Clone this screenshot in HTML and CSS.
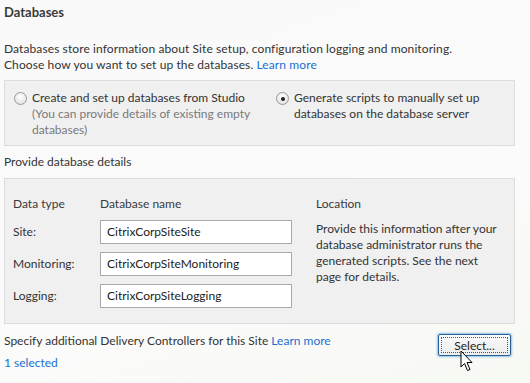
FILE: index.html
```html
<!DOCTYPE html>
<html>
<head>
<meta charset="utf-8">
<link rel="stylesheet" href="styles.css">
</head>
<body>
<div class="page">
  <h1 class="title">Databases</h1>
  <p class="desc">Databases store information about Site setup, configuration logging and monitoring.<br>Choose how you want to set up the databases. <a class="link">Learn more</a></p>
  <div class="choice-box">
    <label class="choice">
      <span class="radio"></span>
      <span class="choice-text">Create and set up databases from Studio<br><span class="muted">(You can provide details of existing empty databases)</span></span>
    </label>
    <label class="choice">
      <span class="radio checked"></span>
      <span class="choice-text">Generate scripts to manually set up databases on the database server</span>
    </label>
  </div>
  <div class="section-label">Provide database details</div>
  <div class="details-box">
    <div class="grid">
      <div class="col-head">Data type</div>
      <div class="col-head">Database name</div>
      <div class="col-head loc-head">Location</div>
      <div class="row-label">Site:</div>
      <div class="field">CitrixCorpSiteSite</div>
      <div class="loc-text">Provide this information after your database administrator runs the generated scripts. See the next page for details.</div>
      <div class="row-label">Monitoring:</div>
      <div class="field">CitrixCorpSiteMonitoring</div>
      <div class="row-label">Logging:</div>
      <div class="field">CitrixCorpSiteLogging</div>
    </div>
  </div>
  <div class="controllers">
    <div class="ctrl-text">
      <div>Specify additional Delivery Controllers for this Site <a class="link">Learn more</a></div>
      <div class="link selected">1 selected</div>
    </div>
    <button class="btn"><span class="btn-inner">Select...</span></button>
  </div>
</div>
<svg class="cursor" width="14" height="22" viewBox="0 0 14 22">
  <path d="M1 1 L1 17 L4.5 13.5 L7.5 20.5 L10 19.5 L7 12.5 L12 12.5 Z" fill="#fff" stroke="#000" stroke-width="1" stroke-linejoin="miter"/>
</svg>
</body>
</html>
```
FILE: styles.css
```css
html, body {
  margin: 0;
  padding: 0;
}
body {
  width: 530px;
  height: 383px;
  overflow: hidden;
  background: linear-gradient(160deg, #f9f9f9 0%, #fbfbfb 60%, #f7f9f3 100%);
  font-family: Lato, "Liberation Sans", sans-serif;
  font-size: 12px;
  color: #333;
  position: relative;
}
.page {
  width: 511px;
  margin-left: 4px;
}
.title {
  margin: 0;
  padding-top: 3px;
  font-size: 13px;
  font-weight: 700;
  color: #3a3a3a;
  line-height: 18px;
}
.desc {
  margin: 20px 0 0;
  line-height: 16px;
  letter-spacing: 0.1px;
}
.link {
  color: #1a6fd0;
  text-decoration: none;
  cursor: pointer;
}
.choice-box {
  margin-top: 7px;
  width: 511px;
  height: 66px;
  background: #f0f0f0;
  border: 1px solid #dcdcdc;
  display: grid;
  grid-template-columns: 262px 240px;
  padding: 0 0 0 9px;
  box-sizing: border-box;
}
.choice {
  display: flex;
  align-items: flex-start;
  gap: 5px;
  padding-top: 9px;
  line-height: 16px;
}
.radio {
  flex: none;
  width: 13px;
  height: 13px;
  margin-top: 2px;
  border-radius: 50%;
  border: 1px solid #9a9a9a;
  background: radial-gradient(circle at 50% 35%, #ffffff 0%, #e6e6e6 70%, #d8d8d8 100%);
  box-sizing: border-box;
  position: relative;
}
.radio.checked::after {
  content: "";
  position: absolute;
  left: 3.5px;
  top: 3.5px;
  width: 4px;
  height: 4px;
  border-radius: 50%;
  background: #222;
}
.muted {
  color: #7a7a7a;
}
.section-label {
  margin-top: 8px;
  line-height: 16px;
}
.details-box {
  margin-top: 8px;
  width: 511px;
  background: #f0f0f0;
  border: 1px solid #dcdcdc;
  height: 146px;
  box-sizing: border-box;
  padding: 17px 0 0 8px;
}
.grid {
  display: grid;
  grid-template-columns: 87px 216px 185px;
  grid-template-rows: 16px 24px 24px 24px;
  row-gap: 8px;
  line-height: 16px;
}
.col-head {
  color: #3a3a3a;
}
.row-label {
  align-self: center;
}
.field {
  width: 192px;
  height: 24px;
  box-sizing: border-box;
  border: 1px solid #a9a9a9;
  background: #fff;
  padding: 0 6px;
  line-height: 22px;
  color: #222;
}
.loc-text {
  grid-column: 3;
  grid-row: 2 / span 3;
  line-height: 16px;
  padding-top: 1px;
}
.controllers {
  width: 511px;
  display: flex;
  justify-content: space-between;
  align-items: flex-start;
  margin-top: 9px;
}
.ctrl-text {
  line-height: 16px;
}
.selected {
  margin-top: 6px;
}
.btn {
  margin-top: 1px;
  margin-right: 4px;
  width: 73px;
  height: 22px;
  padding: 2px;
  border: 1px solid #2a5f97;
  border-radius: 2px;
  background: linear-gradient(#fbfbfb, #ececec);
  box-shadow: 0 0 2px 1px #8fc0e6;
  font-family: inherit;
  font-size: 12px;
  color: #222;
}
.btn-inner {
  display: block;
  height: 100%;
  border: 1px dotted #555;
  box-sizing: border-box;
  line-height: 15px;
}
.cursor {
  position: absolute;
  left: 460px;
  top: 350px;
}
```
